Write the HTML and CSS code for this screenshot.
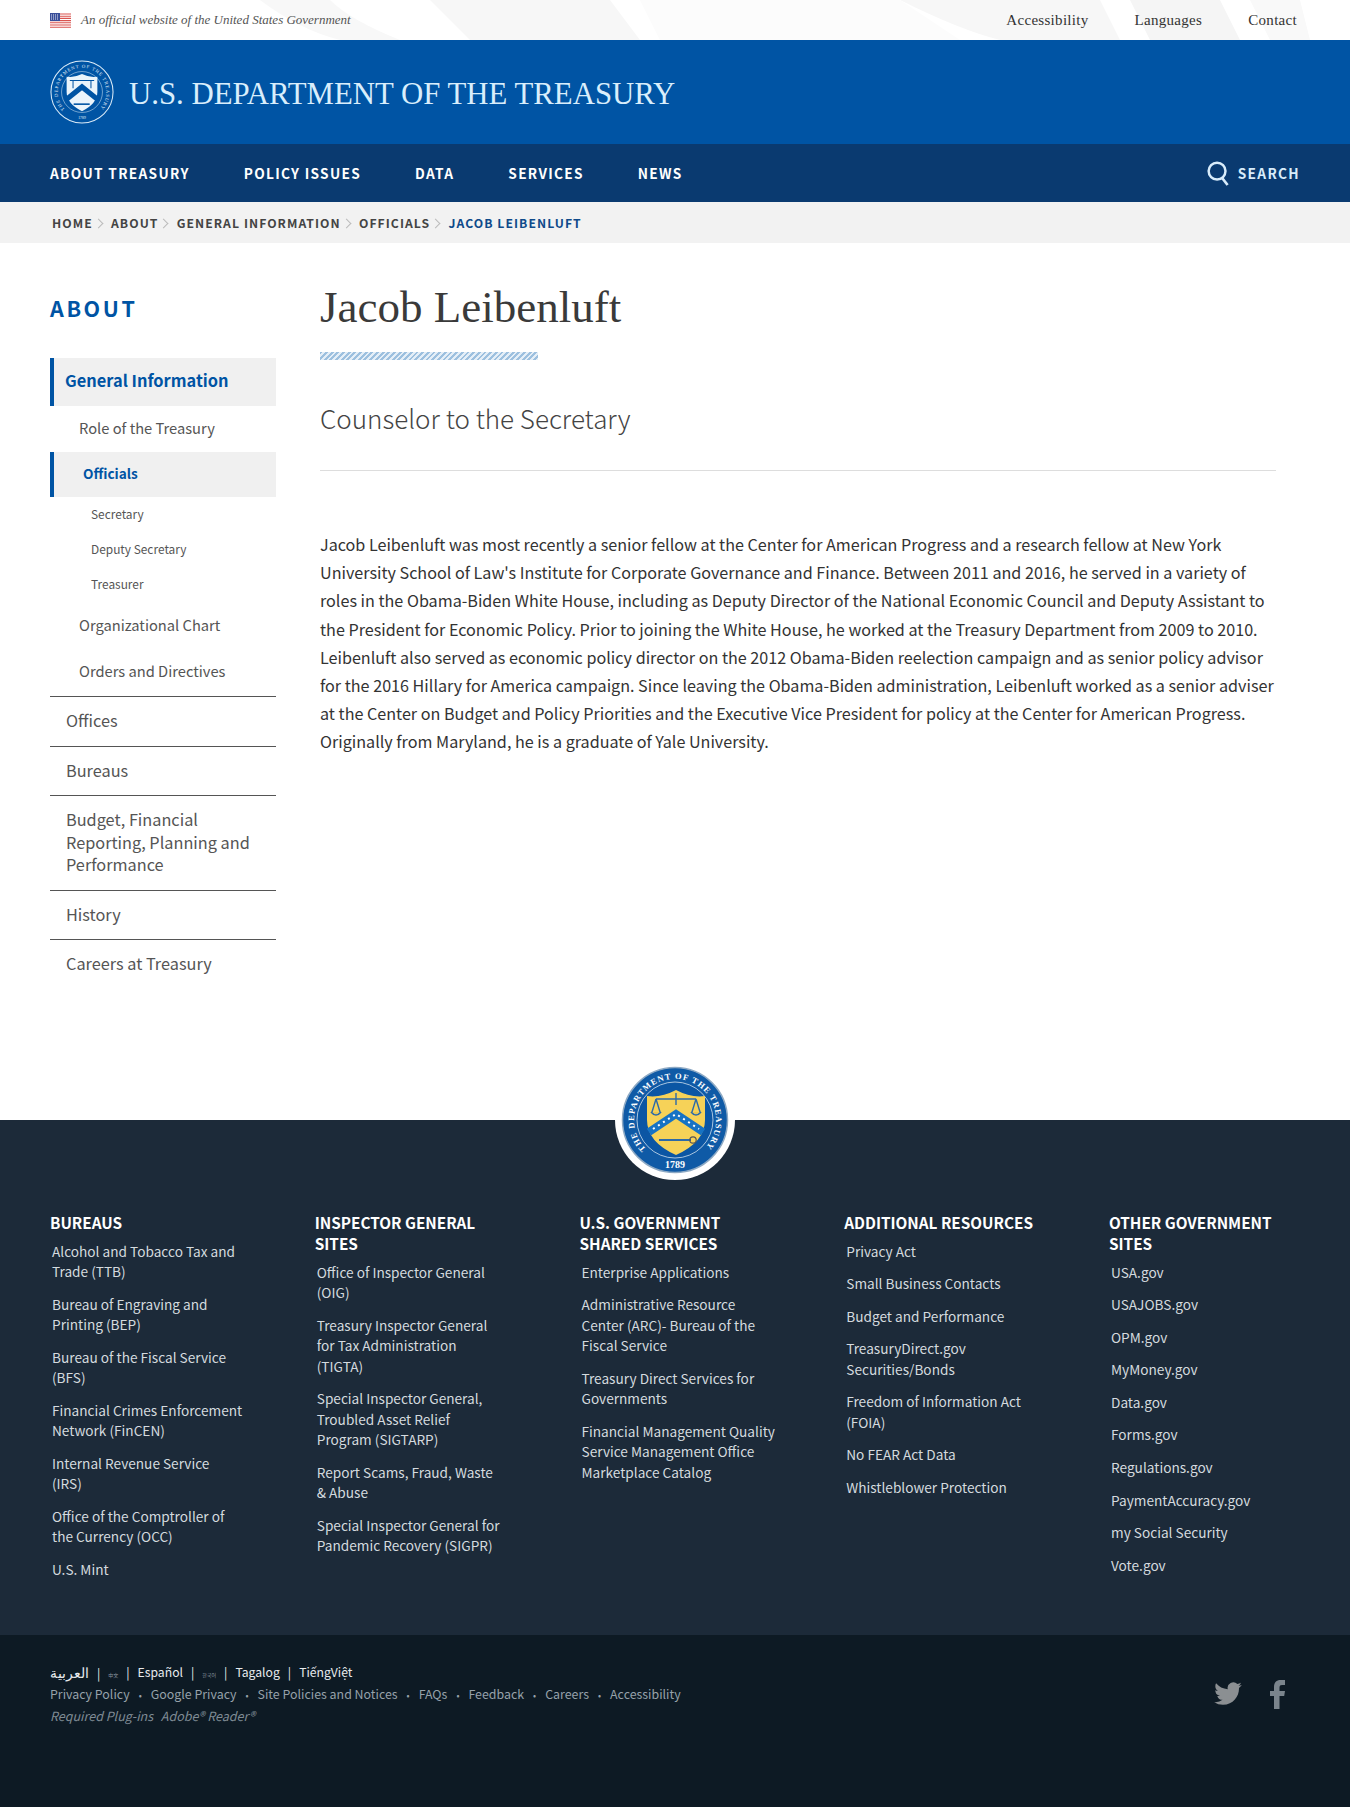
FILE: index.html
```html
<!DOCTYPE html>
<html lang="en">
<head>
  <meta charset="UTF-8" />
  <title>Jacob Leibenluft | U.S. Department of the Treasury</title>
  <meta name="viewport" content="width=device-width, initial-scale=1.0" />
  <link rel="stylesheet" href="styles.css">
</head>
<body>

  <div class="topbar">
    <svg class="topbar-bg" viewBox="0 0 1350 40" preserveAspectRatio="none" aria-hidden="true">
      <path d="M430 0 L470 40 L640 40 L610 0Z" fill="#f7f7f7"/>
      <path d="M260 0 Q300 30 340 40 L400 40 Q350 20 330 0Z" fill="#f8f8f8"/>
      <path d="M900 0 Q960 30 1000 40 L1120 40 L1100 0Z" fill="#f7f7f7"/>
      <path d="M1130 0 L1150 40 L1240 40 L1220 0Z" fill="#f5f5f5"/>
      <path d="M1250 0 L1270 40 L1310 40 L1300 0Z" fill="#f9f9f9"/>
      <path d="M640 0 L900 0 L960 40 L660 40Z" fill="#fcfcfc"/>
    </svg>
    <div class="official">
      <svg class="flag" viewBox="0 0 21 15" aria-hidden="true">
        <rect width="21" height="15" fill="#fff"/>
        <path d="M0 1h21M0 3.2h21M0 5.4h21M0 7.6h21M0 9.8h21M0 12h21M0 14.2h21" stroke="#d9534f" stroke-width="1.1"/>
        <rect width="10" height="8" fill="#3a4f9a"/>
        <path d="M1 2h8M1 4h8M1 6h8" stroke="#fff" stroke-width=".9" stroke-dasharray="1 1"/>
      </svg>
      <em>An official website of the United States Government</em>
    </div>
    <ul class="toplinks">
      <li><a href="#">Accessibility</a></li>
      <li><a href="#">Languages</a></li>
      <li><a href="#">Contact</a></li>
    </ul>
  </div>

  <header class="masthead">
    <svg class="masthead-seal" viewBox="0 0 100 100" aria-hidden="true">
      <defs><path id="sealArc" d="M23.1 76.9 A38 38 0 1 1 76.9 76.9"/></defs>
      <circle cx="50" cy="50" r="48.5" fill="none" stroke="#dcecf8" stroke-width="1.6"/>
      <circle cx="50" cy="50" r="32" fill="none" stroke="#dcecf8" stroke-width=".8"/>
      <text class="seal-text" fill="#e6f2fb"><textPath href="#sealArc" textLength="176">THE DEPARTMENT OF THE TREASURY</textPath></text>
      <text class="seal-year" x="50" y="92" text-anchor="middle" fill="#e6f2fb">1789</text>
      <path d="M26 26 Q38 28 50 22 Q62 28 74 26 L74 50 Q74 68 50 80 Q26 68 26 50Z" fill="#eaf4fb"/>
      <path d="M31 32H69M36 32V44M64 32V44" stroke="#0054a4" stroke-width="1.6" fill="none"/>
      <path d="M25 62 L50 42 L75 62" stroke="#0054a4" stroke-width="8" fill="none"/>
      <path d="M37 69H62" stroke="#0054a4" stroke-width="2.5"/>
    </svg>
    <div class="masthead-title">U.S. Department of the Treasury</div>
  </header>

  <nav class="mainnav">
    <ul>
      <li><a href="#">About Treasury</a></li>
      <li><a href="#">Policy Issues</a></li>
      <li><a href="#">Data</a></li>
      <li><a href="#">Services</a></li>
      <li><a href="#">News</a></li>
    </ul>
    <a class="search" href="#">
      <svg viewBox="0 0 24 26" aria-hidden="true">
        <circle cx="10.5" cy="10.5" r="8.8" fill="none" stroke="#d8ecfb" stroke-width="2.6"/>
        <path d="M16 18 L21.5 25" stroke="#d8ecfb" stroke-width="2.8" fill="none"/>
      </svg>
      <span>Search</span>
    </a>
  </nav>

  <ol class="crumbs">
    <li><a href="#">Home</a></li>
    <li><a href="#">About</a></li>
    <li><a href="#">General Information</a></li>
    <li><a href="#">Officials</a></li>
    <li class="is-current">Jacob Leibenluft</li>
  </ol>

  <main class="page">
    <aside class="sidebar">
      <h2>About</h2>
      <ul class="sidenav">
        <li>
          <a class="lvl1 is-active" href="#">General Information</a>
          <a class="lvl2" href="#">Role of the Treasury</a>
          <a class="lvl2-active" href="#">Officials</a>
          <a class="lvl3" href="#">Secretary</a>
          <a class="lvl3" href="#">Deputy Secretary</a>
          <a class="lvl3" href="#">Treasurer</a>
          <a class="lvl2 org" href="#">Organizational Chart</a>
          <a class="lvl2 orders" href="#">Orders and Directives</a>
        </li>
        <li><a class="lvl1" href="#">Offices</a></li>
        <li><a class="lvl1" href="#">Bureaus</a></li>
        <li><a class="lvl1" href="#">Budget, Financial Reporting, Planning and Performance</a></li>
        <li><a class="lvl1" href="#">History</a></li>
        <li><a class="lvl1" href="#">Careers at Treasury</a></li>
      </ul>
    </aside>

    <article class="content">
      <h1>Jacob Leibenluft</h1>
      <div class="stripe"></div>
      <h2>Counselor to the Secretary</h2>
      <p>Jacob Leibenluft was most recently a senior fellow at the Center for American Progress and a research fellow at New York University School of Law's Institute for Corporate Governance and Finance. Between 2011 and 2016, he served in a variety of roles in the Obama-Biden White House, including as Deputy Director of the National Economic Council and Deputy Assistant to the President for Economic Policy. Prior to joining the White House, he worked at the Treasury Department from 2009 to 2010. Leibenluft also served as economic policy director on the 2012 Obama-Biden reelection campaign and as senior policy advisor for the 2016 Hillary for America campaign. Since leaving the Obama-Biden administration, Leibenluft worked as a senior adviser at the Center on Budget and Policy Priorities and the Executive Vice President for policy at the Center for American Progress. Originally from Maryland, he is a graduate of Yale University.</p>
    </article>
  </main>

  <footer class="footer">
    <svg class="footer-seal" viewBox="0 0 120 120" aria-hidden="true">
      <defs><path id="footArc" d="M31 89 A41 41 0 1 1 89 89"/></defs>
      <circle cx="60" cy="60" r="60" fill="#fff"/>
      <circle cx="60" cy="60" r="52.5" fill="#0f5aa6" stroke="#8da9c4" stroke-width="1.5"/>
      <circle cx="60" cy="60" r="38" fill="#0b56a4" stroke="#cfe0ee" stroke-width=".8"/>
      <text class="foot-seal-text" fill="#fff"><textPath href="#footArc" textLength="190">THE DEPARTMENT OF THE TREASURY</textPath></text>
      <text class="foot-seal-year" x="60" y="108" text-anchor="middle" fill="#fff">1789</text>
      <path d="M32 36 Q46 38 61 30 Q76 38 90 36 L90 60 Q90 82 61 95 Q32 82 32 60Z" fill="#f6d258"/>
      <path d="M41 39H81M61 33V45M41 39L37 52M41 39L45 52M81 39L77 52M81 39L85 52" stroke="#2d6aa8" stroke-width="1.4" fill="none"/>
      <path d="M36 52Q41 58 46 52M76 52Q81 58 86 52" stroke="#2d6aa8" stroke-width="1.6" fill="#e8c650"/>
      <path d="M34 72 L61 54 L88 72" stroke="#1673c4" stroke-width="8" fill="none"/>
      <path d="M38 69L61 54L84 69" stroke="#fff" stroke-width="2" stroke-dasharray="2 4" fill="none"/>
      <path d="M44 80H76" stroke="#2d6aa8" stroke-width="2"/>
      <circle cx="78" cy="80" r="3.2" fill="none" stroke="#555" stroke-width="1.2"/>
    </svg>

    <div class="footer-cols">
      <section>
        <h3>Bureaus</h3>
        <ul>
          <li><a href="#">Alcohol and Tobacco Tax and<br>Trade (TTB)</a></li>
          <li><a href="#">Bureau of Engraving and<br>Printing (BEP)</a></li>
          <li><a href="#">Bureau of the Fiscal Service<br>(BFS)</a></li>
          <li><a href="#">Financial Crimes Enforcement<br>Network (FinCEN)</a></li>
          <li><a href="#">Internal Revenue Service<br>(IRS)</a></li>
          <li><a href="#">Office of the Comptroller of<br>the Currency (OCC)</a></li>
          <li><a href="#">U.S. Mint</a></li>
        </ul>
      </section>
      <section>
        <h3>Inspector General Sites</h3>
        <ul>
          <li><a href="#">Office of Inspector General<br>(OIG)</a></li>
          <li><a href="#">Treasury Inspector General<br>for Tax Administration<br>(TIGTA)</a></li>
          <li><a href="#">Special Inspector General,<br>Troubled Asset Relief<br>Program (SIGTARP)</a></li>
          <li><a href="#">Report Scams, Fraud, Waste<br>&amp; Abuse</a></li>
          <li><a href="#">Special Inspector General for<br>Pandemic Recovery (SIGPR)</a></li>
        </ul>
      </section>
      <section>
        <h3>U.S. Government Shared Services</h3>
        <ul>
          <li><a href="#">Enterprise Applications</a></li>
          <li><a href="#">Administrative Resource<br>Center (ARC)- Bureau of the<br>Fiscal Service</a></li>
          <li><a href="#">Treasury Direct Services for<br>Governments</a></li>
          <li><a href="#">Financial Management Quality<br>Service Management Office<br>Marketplace Catalog</a></li>
        </ul>
      </section>
      <section>
        <h3>Additional Resources</h3>
        <ul>
          <li><a href="#">Privacy Act</a></li>
          <li><a href="#">Small Business Contacts</a></li>
          <li><a href="#">Budget and Performance</a></li>
          <li><a href="#">TreasuryDirect.gov<br>Securities/Bonds</a></li>
          <li><a href="#">Freedom of Information Act<br>(FOIA)</a></li>
          <li><a href="#">No FEAR Act Data</a></li>
          <li><a href="#">Whistleblower Protection</a></li>
        </ul>
      </section>
      <section>
        <h3>Other Government Sites</h3>
        <ul>
          <li><a href="#">USA.gov</a></li>
          <li><a href="#">USAJOBS.gov</a></li>
          <li><a href="#">OPM.gov</a></li>
          <li><a href="#">MyMoney.gov</a></li>
          <li><a href="#">Data.gov</a></li>
          <li><a href="#">Forms.gov</a></li>
          <li><a href="#">Regulations.gov</a></li>
          <li><a href="#">PaymentAccuracy.gov</a></li>
          <li><a href="#">my Social Security</a></li>
          <li><a href="#">Vote.gov</a></li>
        </ul>
      </section>
    </div>

    <div class="subfooter">
      <div class="subfooter-text">
        <ul class="langs">
          <li><a class="arabic" href="#" lang="ar">العربية</a></li>
          <li><a class="cjk" href="#" lang="zh">中文</a></li>
          <li><a href="#">Español</a></li>
          <li><a class="cjk" href="#" lang="ko">한국어</a></li>
          <li><a href="#">Tagalog</a></li>
          <li><a href="#">TiếngViệt</a></li>
        </ul>
        <ul class="legal">
          <li><a href="#">Privacy Policy</a></li>
          <li><a href="#">Google Privacy</a></li>
          <li><a href="#">Site Policies and Notices</a></li>
          <li><a href="#">FAQs</a></li>
          <li><a href="#">Feedback</a></li>
          <li><a href="#">Careers</a></li>
          <li><a href="#">Accessibility</a></li>
        </ul>
        <p class="plugins"><em>Required Plug-ins</em> <a href="#"><em>Adobe® Reader®</em></a></p>
      </div>
      <div class="social">
        <a href="#" aria-label="Twitter">
          <svg class="tw" viewBox="0 0 24 20" aria-hidden="true"><path d="M23.953 2.57a10 10 0 01-2.825.775 4.958 4.958 0 002.163-2.723c-.951.555-2.005.959-3.127 1.184a4.92 4.92 0 00-8.384 4.482C7.69 6.095 4.067 4.13 1.64 1.162a4.822 4.822 0 00-.666 2.475c0 1.71.87 3.213 2.188 4.096a4.904 4.904 0 01-2.228-.616v.06a4.923 4.923 0 003.946 4.827 4.996 4.996 0 01-2.212.085 4.936 4.936 0 004.604 3.417 9.867 9.867 0 01-6.102 2.105c-.39 0-.779-.023-1.17-.067a13.995 13.995 0 007.557 2.209c9.053 0 13.998-7.496 13.998-13.985 0-.21 0-.42-.015-.63A9.935 9.935 0 0024 2.59z"/></svg>
        </a>
        <a href="#" aria-label="Facebook">
          <svg class="fb" viewBox="0 0 15 29" aria-hidden="true"><path d="M4 29V16H0v-5h4V7c0-4.500 2.500-7 6.500-7H15v5h-3c-1.700 0-2.500.8-2.500 2.500V11H15l-.8 5H9.500v13z"/></svg>
        </a>
      </div>
    </div>
  </footer>

</body>
</html>
```

FILE: styles.css
```css
* {
  box-sizing: border-box;
}

body {
  --sans: "Noto Sans CJK JP", "Noto Sans", sans-serif;
  --serif: "Liberation Serif", serif;
  --blue: #0054a4;

  margin: 0;
  font-family: var(--sans);
  color: #333;
  background: #fff;
}

ul, ol {
  margin: 0;
  padding: 0;
  list-style: none;
}

a {
  color: inherit;
  text-decoration: none;
}

/* top strip */
.topbar {
  position: relative;
  display: flex;
  align-items: center;
  justify-content: space-between;
  height: 40px;
  padding: 0 53px 0 50px;
  overflow: hidden;
}

.topbar-bg {
  position: absolute;
  inset: 0;
  width: 100%;
  height: 100%;
}

.official {
  position: relative;
  display: flex;
  align-items: center;
  gap: 10px;
  font-family: var(--serif);
  font-size: 13px;
  color: #555;
}

.flag {
  width: 21px;
  height: 15px;
}

.toplinks {
  position: relative;
  display: flex;
  gap: 46px;
  font-family: var(--serif);
  font-size: 15px;
  letter-spacing: 0.3px;
  color: #333;
}

/* blue band */
.masthead {
  display: flex;
  align-items: center;
  gap: 15px;
  height: 104px;
  padding-left: 50px;
  background: var(--blue);
}

.masthead-seal {
  width: 64px;
  height: 64px;
  flex: none;
}

.seal-text {
  font-family: var(--serif);
  font-size: 7.500px;
}

.seal-year {
  font-family: var(--serif);
  font-size: 6px;
}

.masthead-title {
  padding-top: 4px;
  font-family: var(--serif);
  font-size: 30.800px;
  line-height: 40px;
  text-transform: uppercase;
  color: #d9eefc;
}

.mainnav {
  display: flex;
  align-items: center;
  justify-content: space-between;
  height: 58px;
  padding: 0 50px;
  background: #0a3a70;
  color: #fff;
  font-size: 13.700px;
  font-weight: 600;
  letter-spacing: 1.300px;
  text-transform: uppercase;

  ul {
    display: flex;
    gap: 54px;
  }
}

.search {
  display: flex;
  align-items: center;
  gap: 8px;
  color: #d8ecfb;

  svg {
    width: 23px;
    height: 25px;
  }
}

.crumbs {
  display: flex;
  align-items: center;
  height: 41px;
  padding-left: 52px;
  background: #f2f2f2;
  color: #444;
  font-size: 12.200px;
  font-weight: 600;
  letter-spacing: 1.050px;
  text-transform: uppercase;

  li:not(:last-child)::after {
    content: "";
    display: inline-block;
    width: 6px;
    height: 6px;
    margin: 0 9.300px 1px 2px;
    border-top: 1px solid #bbb;
    border-right: 1px solid #bbb;
    rotate: 45deg;
  }

  .is-current {
    color: #0f4a8a;
  }
}

/* page body */
.page {
  display: grid;
  grid-template-columns: 226px 956px;
  gap: 44px;
  height: 877px;
  padding-left: 50px;
}

.sidebar {
  h2 {
    margin: 50px 0 35px;
    font-size: 21.500px;
    line-height: 30px;
    font-weight: 700;
    letter-spacing: 2.600px;
    text-transform: uppercase;
    color: var(--blue);
  }
}

.sidenav {
  color: #555;

  li + li {
    border-top: 1px solid #555;
  }

  a {
    display: block;
  }

  .lvl1 {
    padding: 12px 16px 14px;
    font-size: 16.300px;
    line-height: 22.500px;
  }

  .lvl1.is-active {
    height: 48px;
    padding: 11px 0 0 11px;
    border-left: 4px solid var(--blue);
    background: #f0f0f0;
    color: var(--blue);
    font-size: 16.400px;
    font-weight: 700;
  }

  .lvl2 {
    padding: 11px 0 13px 29px;
    font-size: 14.700px;
    line-height: 22px;
  }

  .lvl2.org {
    padding-top: 12px;
    padding-bottom: 14px;
  }

  .lvl2.orders {
    padding-top: 10px;
    padding-bottom: 14px;
  }

  .lvl2-active {
    height: 45px;
    padding: 10px 0 0 29px;
    border-left: 4px solid var(--blue);
    background: #f0f0f0;
    color: var(--blue);
    font-size: 13.600px;
    line-height: 22px;
    font-weight: 700;
  }

  .lvl3 {
    height: 35px;
    padding: 6px 0 0 41px;
    font-size: 11.900px;
    line-height: 21px;
  }
}

.content {
  h1 {
    margin: 40px 0 21px;
    font-family: var(--serif);
    font-size: 45px;
    line-height: 48px;
    font-weight: 400;
    color: #3a3a3a;
  }

  h2 {
    margin: 40px 0 0;
    padding-bottom: 34px;
    border-bottom: 1px solid #ddd;
    font-size: 26px;
    line-height: 36px;
    font-weight: 300;
    color: #444;
  }

  p {
    margin: 59px 0 0;
    font-size: 16.150px;
    line-height: 28.200px;
    color: #333;
  }
}

.stripe {
  width: 218px;
  height: 8px;
  background: repeating-linear-gradient(135deg, #9dc0df 0 2px, #e4eef7 2px 4px);
}

/* footer */
.footer {
  position: relative;
  background: #1c2a39;
}

.footer-seal {
  position: absolute;
  top: -60px;
  left: 615px;
  width: 120px;
  height: 120px;
}

.foot-seal-text {
  font-family: var(--serif);
  font-size: 8.500px;
  font-weight: 700;
}

.foot-seal-year {
  font-family: var(--serif);
  font-size: 10px;
  font-weight: 700;
}

.footer-cols {
  display: grid;
  grid-template-columns: repeat(5, 264.750px);
  height: 515px;
  padding: 92px 0 0 50px;

  h3 {
    width: 196px;
    margin: 0 0 7.500px;
    font-size: 15.300px;
    line-height: 21px;
    font-weight: 600;
    text-transform: uppercase;
    color: #fff;
  }

  ul {
    display: flex;
    flex-direction: column;
    gap: 12.100px;
    width: 230px;
    padding-left: 2px;
  }

  li {
    font-size: 13.650px;
    line-height: 20.500px;
    color: #d4dadf;
  }
}

.subfooter {
  display: flex;
  justify-content: space-between;
  height: 172px;
  padding: 26px 0 0 50px;
  background: #0d1a24;
}

.langs {
  display: flex;
  height: 22px;
  font-size: 12.200px;
  line-height: 22px;
  color: #e8ebee;

  li:not(:last-child)::after {
    content: "|";
    margin: 0 8px;
  }

  .arabic {
    font-size: 14px;
  }

  .cjk {
    font-size: 5px;
    color: #8d98a1;
  }
}

.legal {
  display: flex;
  height: 22px;
  font-size: 12.400px;
  line-height: 22px;
  color: #96a1aa;

  li:not(:last-child)::after {
    content: "•";
    margin: 0 9px;
    font-size: 9px;
  }
}

.plugins {
  margin: 0;
  font-size: 12.500px;
  line-height: 22px;
  color: #7f8b94;

  a {
    margin-left: 5px;
  }
}

.social {
  display: flex;
  gap: 28px;
  align-items: flex-start;
  padding: 19px 65px 0 0;

  .tw {
    display: block;
    width: 28px;
    height: 23px;
    margin-top: 2px;
    fill: #8b8f92;
  }

  .fb {
    display: block;
    width: 15px;
    height: 29px;
    fill: #7a848c;
  }
}
```
